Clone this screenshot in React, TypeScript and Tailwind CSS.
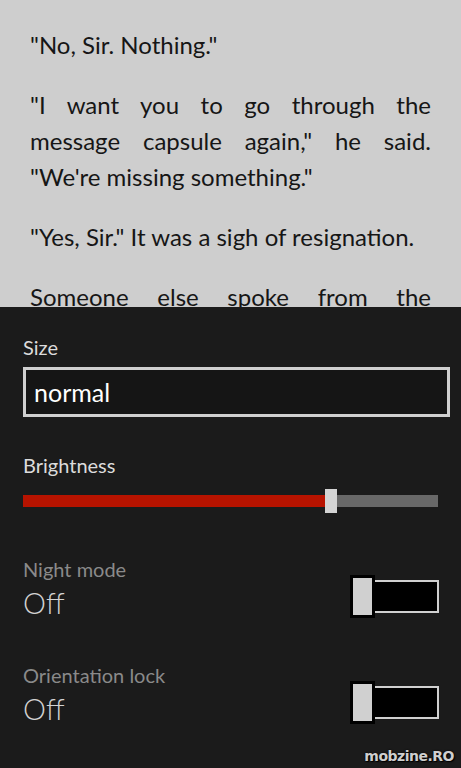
import React from "react";

const paragraphs = [
  '"No, Sir. Nothing."',
  '"I want you to go through the message capsule again," he said. "We\'re missing something."',
  '"Yes, Sir." It was a sigh of resignation.',
  "Someone else spoke from the communications console behind him.",
];

const Toggle = () => (
  <div className="relative w-[86px] h-[37px] mr-[11px] shrink-0">
    <div className="absolute left-[17px] right-0 top-[2px] bottom-[2px] border-2 border-[#d0d0d0] bg-black" />
    <div className="absolute left-0 top-0 w-[19px] h-[37px] bg-[#d0d0d0] ring-[3px] ring-black" />
  </div>
);

const ToggleRow = ({ label, value, gap }: { label: string; value: string; gap: string }) => (
  <div className={`flex items-start justify-between ${gap}`}>
    <div>
      <div className="text-[20px] leading-[28px] text-[#8a8a8a]">{label}</div>
      <div className="text-[29px] leading-[36px] font-light text-[#d2d2d2] mt-[2px]">{value}</div>
    </div>
    <div className="mt-[23px]">
      <Toggle />
    </div>
  </div>
);

export default function App() {
  return (
    <div className="relative w-[461px] h-[768px] overflow-hidden flex flex-col font-['Lato',sans-serif]">
      <div className="h-[307px] shrink-0 overflow-hidden bg-[#cecece] px-[30px] pt-[27px] text-[#161616]">
        {paragraphs.map((p, i) => (
          <p key={i} className="text-[24px] leading-[36px] text-justify mb-6">
            {p}
          </p>
        ))}
      </div>

      <div className="flex-1 bg-[#1b1b1b] pl-[23px] pr-[11px] pt-[26px]">
        <div className="text-[20px] leading-[28px] text-[#dcdcdc]">Size</div>
        <div className="mt-[6px] h-[50px] border-[3px] border-[#d0d0d0] bg-[#151515] flex items-center px-[8px]">
          <span className="text-[25px] leading-[30px] text-white">normal</span>
        </div>

        <div className="mt-[34px] text-[20px] leading-[28px] text-[#dcdcdc]">Brightness</div>
        <div className="mt-[10px] mr-[12px] h-[24px] flex items-center">
          <div className="w-[302px] h-[12px] bg-[#b71300]" />
          <div className="w-[12px] h-[24px] bg-[#d4d4d4]" />
          <div className="flex-1 h-[12px] bg-[#686868]" />
        </div>

        <ToggleRow label="Night mode" value="Off" gap="mt-[42px]" />
        <ToggleRow label="Orientation lock" value="Off" gap="mt-[40px]" />
      </div>

      <div className="absolute right-[7px] bottom-[5px] font-['DejaVu_Sans',sans-serif] font-bold text-[14px] leading-none tracking-[-0.5px] text-[#cfcfcf] [text-shadow:0_0_2px_#000,1px_1px_1px_#000]">
        mobzine.RO
      </div>
    </div>
  );
}
